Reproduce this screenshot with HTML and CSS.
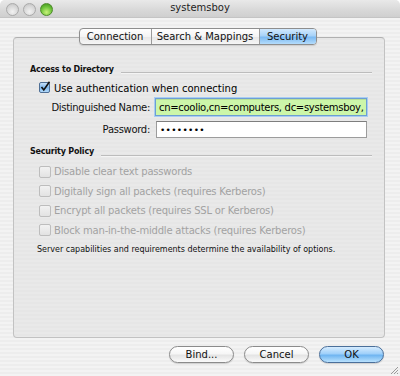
FILE: index.html
```html
<!DOCTYPE html>
<html>
<head>
<meta charset="utf-8">
<link rel="stylesheet" href="styles.css">
</head>
<body>
<div class="window">
  <div class="titlebar">
    <div class="lights">
      <span class="light grey"></span>
      <span class="light grey"></span>
      <span class="light green"></span>
    </div>
    <div class="title">systemsboy</div>
  </div>
  <div class="content">
    <div class="tabs">
      <div class="tab">Connection</div>
      <div class="tab">Search &amp; Mappings</div>
      <div class="tab active">Security</div>
    </div>
    <div class="group">
      <div class="heading"><span>Access to Directory</span><span class="rule"></span></div>
      <div class="check-row first">
        <svg class="box" width="12" height="12" viewBox="0 0 12 12">
          <defs>
            <linearGradient id="cb" x1="0" y1="0" x2="0" y2="1">
              <stop offset="0" stop-color="#cfe6fb"/>
              <stop offset="0.5" stop-color="#7fb8ee"/>
              <stop offset="1" stop-color="#b6dcfb"/>
            </linearGradient>
          </defs>
          <rect x="0.5" y="1.5" width="10" height="10" rx="1.5" fill="url(#cb)" stroke="#4f6f95"/>
          <path d="M2.5 6 L4.8 9 L10.5 0.8" fill="none" stroke="#111" stroke-width="1.6"/>
        </svg>
        <span class="label">Use authentication when connecting</span>
      </div>
      <div class="form">
        <label class="flabel">Distinguished Name:</label>
        <div class="field green">cn=coolio,cn=computers, dc=systemsboy,</div>
        <label class="flabel">Password:</label>
        <div class="field pw">••••••••</div>
      </div>
      <div class="heading second"><span>Security Policy</span><span class="rule"></span></div>
      <div class="policy">
        <div class="check-row dis"><span class="ubox"></span><span class="label">Disable clear text passwords</span></div>
        <div class="check-row dis"><span class="ubox"></span><span class="label">Digitally sign all packets (requires Kerberos)</span></div>
        <div class="check-row dis"><span class="ubox"></span><span class="label">Encrypt all packets (requires SSL or Kerberos)</span></div>
        <div class="check-row dis"><span class="ubox"></span><span class="label">Block man-in-the-middle attacks (requires Kerberos)</span></div>
      </div>
      <div class="note">Server capabilities and requirements determine the availability of options.</div>
    </div>
    <div class="buttons">
      <div class="btn">Bind...</div>
      <div class="btn">Cancel</div>
      <div class="btn ok">OK</div>
    </div>
  </div>
  <svg class="grip" width="10" height="10" viewBox="0 0 10 10">
    <path d="M9 2 L2 9 M9 5 L5 9 M9 8 L8 9" stroke="#9a9a9a" stroke-width="1"/>
  </svg>
</div>
</body>
</html>
```
FILE: styles.css
```css
html, body {
  margin: 0;
  padding: 0;
  background: #ffffff;
}
body {
  width: 400px;
  height: 376px;
  overflow: hidden;
  font-family: "DejaVu Sans", "Liberation Sans", sans-serif;
  font-size: 10px;
  color: #000;
}
.window {
  position: relative;
  width: 400px;
  height: 376px;
  display: flex;
  flex-direction: column;
  border-radius: 5px 5px 0 0;
  overflow: hidden;
  background: repeating-linear-gradient(to bottom, #ededed 0, #ededed 2px, #f3f3f3 2px, #f3f3f3 4px);
}
.titlebar {
  height: 17px;
  flex: none;
  display: flex;
  align-items: center;
  position: relative;
  background: linear-gradient(to bottom, #e9e9e9 0%, #d8d8d8 60%, #cfcfcf 100%);
  border-bottom: 1px solid #c4c4c4;
}
.lights {
  display: flex;
  gap: 3px;
  padding-left: 6px;
  padding-top: 1px;
}
.light {
  width: 11px;
  height: 11px;
  border-radius: 50%;
  display: block;
  margin-right: 1px;
}
.light.grey {
  background: radial-gradient(circle at 50% 70%, #f2f2f2 0%, #d6d6d6 60%, #bdbdbd 100%);
  border: 1px solid #a9a9a9;
}
.light.green {
  background: radial-gradient(circle at 50% 75%, #c8f27a 0%, #6cc23a 55%, #3c8a18 100%);
  border: 1px solid #4d8a2a;
}
.title {
  position: absolute;
  left: 0;
  right: 0;
  top: 2px;
  text-align: center;
  font-size: 10px;
  color: #1e1e1e;
}
.content {
  flex: 1;
  display: flex;
  flex-direction: column;
  padding: 10px 15px 0 13px;
}
.tabs {
  align-self: center;
  display: flex;
  height: 15px;
  margin-left: -3px;
  margin-bottom: -8px;
  position: relative;
  z-index: 1;
  border: 1px solid #8e8e8e;
  border-radius: 4px;
  overflow: hidden;
  background: linear-gradient(to bottom, #ffffff 0%, #f4f4f4 50%, #e6e6e6 51%, #f6f6f6 100%);
  box-shadow: 0 1px 1px rgba(0,0,0,0.12);
}
.tab {
  display: flex;
  align-items: center;
  justify-content: center;
  font-size: 10px;
  color: #111;
  border-right: 1px solid #9a9a9a;
}
.tab:nth-child(1) { width: 71px; }
.tab:nth-child(2) { width: 107px; }
.tab.active {
  width: 56px;
  border-right: none;
  background: linear-gradient(to bottom, #d2e9fd 0%, #a7d2f8 45%, #7cbaf2 55%, #b4dcfc 100%);
}
.group {
  box-sizing: border-box;
  height: 301px;
  flex: none;
  border: 1px solid #c2c2c2;
  border-top-color: #b0b0b0;
  border-radius: 4px;
  background: repeating-linear-gradient(to bottom, #e6e6e6 0, #e6e6e6 2px, #e9e9e9 2px, #e9e9e9 4px);
  padding: 25px 12px 0 16px;
  display: flex;
  flex-direction: column;
}
.heading {
  height: 12px;
  display: flex;
  align-items: center;
  font-size: 8px;
  letter-spacing: -0.2px;
  font-weight: bold;
  color: #111;
}
.heading .rule {
  flex: 1;
  height: 0;
  border-top: 1px solid #bcbcbc;
  border-bottom: 1px solid #f4f4f4;
  margin-left: 7px;
  margin-top: 8px;
}
.heading.second {
  margin-top: 7px;
}
.heading.second .rule {
  margin-top: 9px;
}
.check-row {
  display: flex;
  align-items: center;
  padding-left: 9px;
  height: 12px;
}
.check-row.first {
  margin-top: 7px;
}
.check-row .box {
  flex: none;
  margin-top: -2px;
}
.check-row .label {
  margin-left: 3px;
  white-space: nowrap;
}
.form {
  display: grid;
  grid-template-columns: 120px 212px;
  column-gap: 5px;
  row-gap: 5px;
  margin-top: 4px;
  align-items: center;
}
.flabel {
  text-align: right;
  color: #111;
  letter-spacing: -0.3px;
}
.field {
  height: 17px;
  box-sizing: border-box;
  display: flex;
  align-items: center;
  padding-left: 3px;
  white-space: nowrap;
  overflow: hidden;
}
.field.green {
  height: 18px;
  background: #ccf6a9;
  border: 1px solid #6d9ed4;
  box-shadow: 0 0 0 1px #a8cdf2, inset 0 1px 0 #b7df96;
  letter-spacing: -0.3px;
}
.field.pw {
  margin-left: 1px;
  background: #ffffff;
  border: 1px solid #9c9c9c;
  border-top-color: #7e7e7e;
  font-size: 9px;
  letter-spacing: 0.3px;
  padding-left: 3px;
}
.policy {
  margin-top: 5px;
  display: flex;
  flex-direction: column;
}
.check-row.dis {
  height: 19.5px;
  color: #a2a2a2;
}
.check-row.dis .label {
  letter-spacing: -0.2px;
}
.ubox {
  width: 10px;
  height: 10px;
  flex: none;
  border: 1px solid #bdbdbd;
  border-radius: 2px;
  background: linear-gradient(to bottom, #f2f2f2, #e2e2e2);
}
.note {
  margin-top: 5px;
  font-size: 8px;
  color: #111;
  padding-left: 7px;
  white-space: nowrap;
}
.buttons {
  display: flex;
  justify-content: flex-end;
  gap: 10px;
  margin-top: 8px;
  padding-right: 1px;
}
.btn {
  width: 63px;
  height: 15px;
  border: 1px solid #8b8b8b;
  border-radius: 9px;
  display: flex;
  align-items: center;
  justify-content: center;
  font-size: 10px;
  color: #111;
  background: linear-gradient(to bottom, #ffffff 0%, #f6f6f6 45%, #e4e4e4 55%, #fafafa 100%);
  box-shadow: 0 1px 1px rgba(0,0,0,0.15);
}
.btn.ok {
  border-color: #4a6f9a;
  background: linear-gradient(to bottom, #d6ecfe 0%, #9fd0fa 45%, #6fb5f1 55%, #b9e1fd 100%);
}
.grip {
  position: absolute;
  right: 1px;
  bottom: 1px;
}
```
